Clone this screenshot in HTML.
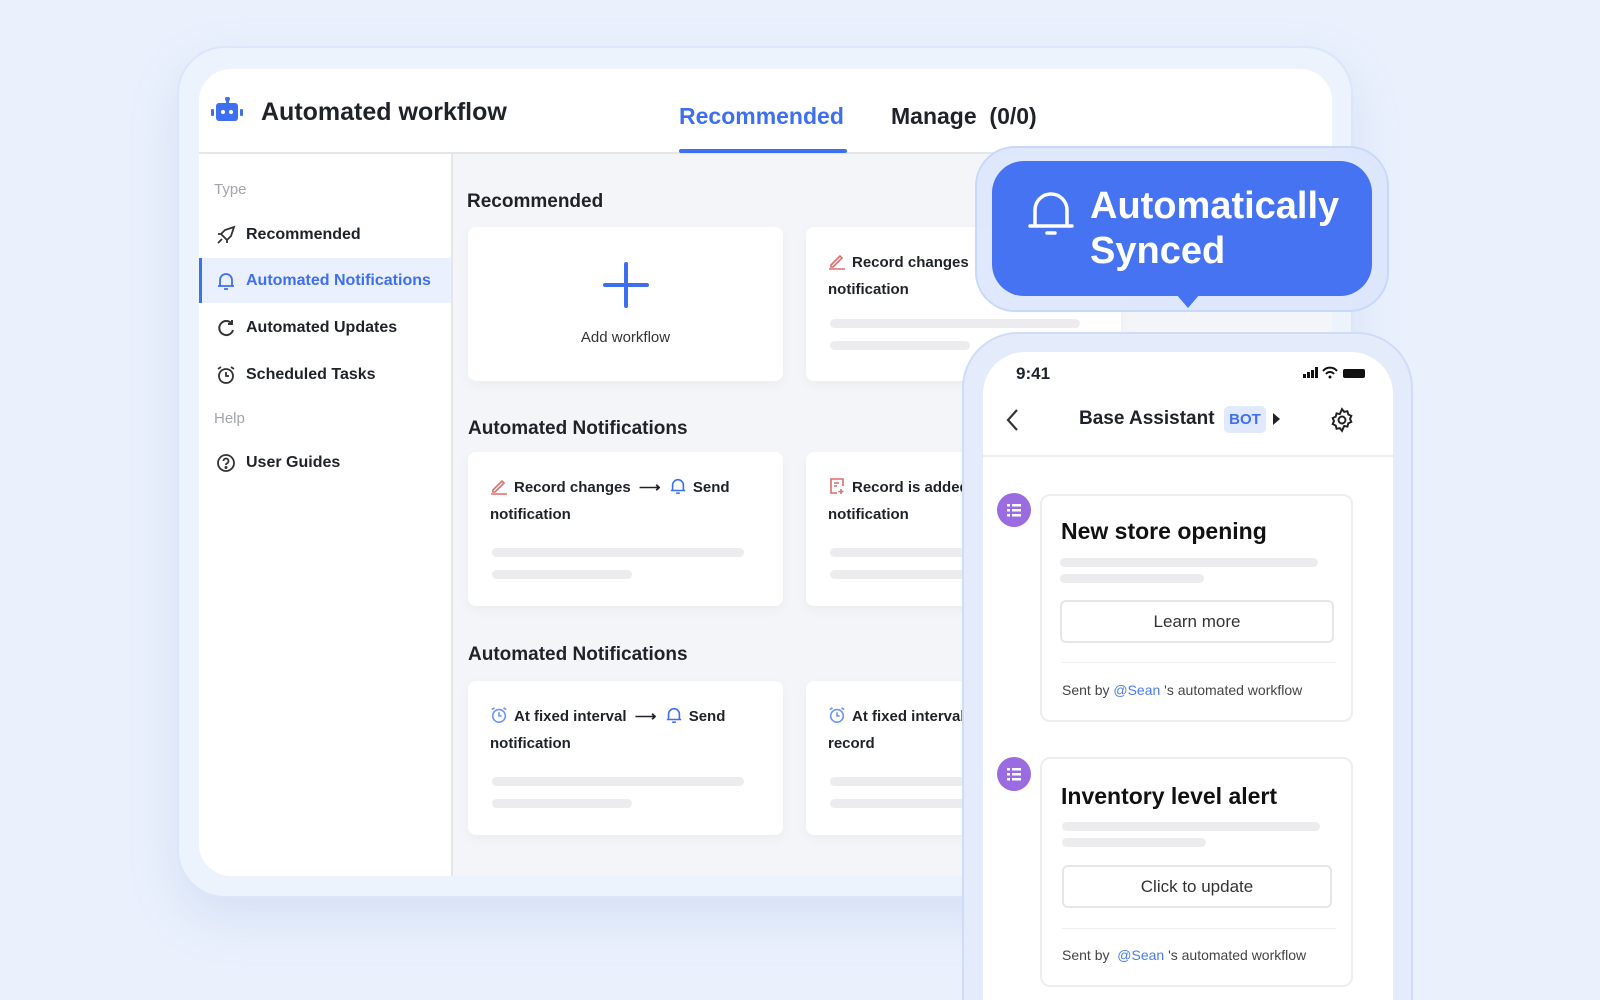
<!DOCTYPE html>
<html><head><meta charset="utf-8"><style>
*{box-sizing:border-box;margin:0;padding:0}
html,body{width:1600px;height:1000px;overflow:hidden}
body{background:#eaf1fd;font-family:"Liberation Sans",sans-serif;color:#1f2329;position:relative}
.a{position:absolute}
.frame{left:177px;top:46px;width:1176px;height:852px;border-radius:48px;background:#edf3fd;border:2px solid #dbe6fb;box-shadow:0 20px 50px rgba(120,150,210,.18)}
.panel{left:199px;top:69px;width:1133px;height:807px;border-radius:32px;background:#f3f5f8;overflow:hidden}
.hdr{left:0;top:0;width:1133px;height:85px;background:#fff;border-bottom:2px solid #e4e6ea}
.side{left:0;top:85px;width:254px;height:722px;background:#fff;border-right:2px solid #e4e6ea}
.si{position:absolute;left:0;width:252px;height:45px;display:flex;align-items:center;padding-left:17px;font-size:16px;font-weight:bold;color:#1f2329}
.si svg{margin-right:10px}
.lab{position:absolute;left:15px;font-size:15px;color:#a0a4ab}
.card{position:absolute;width:315px;height:154px;background:#fff;border-radius:8px;box-shadow:0 4px 12px rgba(0,0,0,.04)}
.h2{position:absolute;font-size:19px;font-weight:bold;color:#1f2329}
.ct{position:absolute;left:22px;top:22px;font-size:15px;font-weight:bold;line-height:27px;color:#1f2329;white-space:nowrap}
.ct svg{vertical-align:-3px;margin-right:6px}
.bar{position:absolute;height:9px;border-radius:5px;background:#ececef}
.phone{left:962px;top:332px;width:451px;height:668px;border-radius:56px 56px 0 0;background:#e4ecfb;border:2px solid #cfdcf8;border-bottom:none}
.pin{left:983px;top:352px;width:410px;height:648px;border-radius:42px 42px 0 0;background:#fff;overflow:hidden}
.mc{position:absolute;left:57px;width:313px;background:#fff;border:2px solid #eceef1;border-radius:10px}
.av{position:absolute;left:14px;width:34px;height:34px;border-radius:50%;background:#9b6ce0}
.btn{position:absolute;left:18px;width:274px;height:43px;border:2px solid #e4e6ea;border-radius:6px;text-align:center;line-height:39px;font-size:17px;color:#333}
.sent{position:absolute;left:20px;font-size:14px;color:#444;white-space:nowrap}
.sent b{color:#4a7cf0;font-weight:normal}
</style></head><body>
<div class="a frame"></div>
<div class="a panel">
 <div class="a hdr">
  <svg class="a" style="left:12px;top:28px" width="32" height="28" viewBox="0 0 32 28"><rect x="15" y="0" width="3" height="6" fill="#3e6ff0"/><circle cx="16.5" cy="2" r="2.5" fill="#3e6ff0"/><rect x="5" y="6" width="22" height="18" rx="3" fill="#3e6ff0"/><rect x="0" y="12" width="3" height="7" rx="1" fill="#3e6ff0"/><rect x="29" y="12" width="3" height="7" rx="1" fill="#3e6ff0"/><circle cx="12" cy="15" r="2" fill="#fff"/><circle cx="20" cy="15" r="2" fill="#fff"/></svg>
  <div class="a" style="left:62px;top:29px;font-size:25px;font-weight:bold">Automated workflow</div>
  <div class="a" style="left:480px;top:34px;font-size:23px;font-weight:bold;color:#3e6ff0">Recommended</div>
  <div class="a" style="left:480px;top:80px;width:168px;height:4px;background:#3e6ff0;border-radius:2px"></div>
  <div class="a" style="left:692px;top:34px;font-size:23px;font-weight:bold">Manage&nbsp; (0/0)</div>
 </div>
 <div class="a side">
  <div class="lab" style="top:27px">Type</div>
  <div class="si" style="top:58px"><svg width="20" height="20" viewBox="0 0 20 20" fill="none" stroke="#333" stroke-width="1.8"><path d="M18 2 L9 5 L5 9 L11 15 L15 11 Z M5 9 L2 9 M11 15 L11 18 M6 14 L2 18"/></svg>Recommended</div>
  <div class="si" style="top:104px;background:#eaf0fd;color:#3e6ff0;border-left:3px solid #3e6ff0;padding-left:14px"><svg width="20" height="20" viewBox="0 0 20 20" fill="none" stroke="#3e6ff0" stroke-width="1.8"><path d="M4 15 V9 a6 6 0 0 1 12 0 V15 Z M2 15 H18 M8 18 H12"/></svg>Automated Notifications</div>
  <div class="si" style="top:151px"><svg width="20" height="20" viewBox="0 0 20 20" fill="none" stroke="#333" stroke-width="2"><path d="M16 6 A7 7 0 1 0 17 12 M16 2 V6 H12"/></svg>Automated Updates</div>
  <div class="si" style="top:198px"><svg width="20" height="20" viewBox="0 0 20 20" fill="none" stroke="#333" stroke-width="1.8"><circle cx="10" cy="11" r="7"/><path d="M10 7 V11 H13 M2 4 L5 2 M18 4 L15 2"/></svg>Scheduled Tasks</div>
  <div class="lab" style="top:256px">Help</div>
  <div class="si" style="top:286px"><svg width="20" height="20" viewBox="0 0 20 20" fill="none" stroke="#333" stroke-width="1.8"><circle cx="10" cy="10" r="8"/><path d="M7.5 8 a2.5 2.5 0 1 1 3.5 2.3 c-.8.4-1 .9-1 1.7"/><circle cx="10" cy="14.5" r=".6" fill="#333"/></svg>User Guides</div>
 </div>
 <div class="h2" style="left:268px;top:122px">Recommended</div>
 <div class="card" style="left:269px;top:158px"><svg class="a" style="left:135px;top:35px" width="46" height="46"><path d="M23 2 V44 M2 23 H44" stroke="#3e6ff0" stroke-width="4" stroke-linecap="round"/></svg><div class="a" style="left:0;width:315px;text-align:center;top:102px;font-size:15px;color:#333">Add workflow</div></div>
 <div class="card" style="left:607px;top:158px"><div class="ct"><svg width="18" height="18" viewBox="0 0 18 18" fill="none" stroke="#e06c6c" stroke-width="1.6"><path d="M3 13 L12 4 L14 6 L5 15 H3 Z M1 17 H17"/></svg>Record changes<br>notification</div><div class="bar" style="left:24px;top:92px;width:250px"></div><div class="bar" style="left:24px;top:114px;width:140px"></div></div>
 <div class="h2" style="left:269px;top:349px">Automated Notifications</div>
 <div class="card" style="left:269px;top:383px"><div class="ct"><svg width="18" height="18" viewBox="0 0 18 18" fill="none" stroke="#e06c6c" stroke-width="1.6"><path d="M3 13 L12 4 L14 6 L5 15 H3 Z M1 17 H17"/></svg>Record changes &nbsp;⟶&nbsp; <svg width="18" height="18" viewBox="0 0 20 20" fill="none" stroke="#3e6ff0" stroke-width="1.8"><path d="M4 15 V9 a6 6 0 0 1 12 0 V15 Z M2 15 H18 M8 18 H12"/></svg>Send<br>notification</div><div class="bar" style="left:24px;top:96px;width:252px"></div><div class="bar" style="left:24px;top:118px;width:140px"></div></div>
 <div class="card" style="left:607px;top:383px"><div class="ct"><svg width="18" height="18" viewBox="0 0 18 18" fill="none" stroke="#e06c6c" stroke-width="1.6"><path d="M15 9 V2 H3 V16 H9 M6 6 H11 M6 9 H9 M13 12 V17 M10.5 14.5 H15.5"/></svg>Record is added<br>notification</div><div class="bar" style="left:24px;top:96px;width:252px"></div><div class="bar" style="left:24px;top:118px;width:140px"></div></div>
 <div class="h2" style="left:269px;top:575px">Automated Notifications</div>
 <div class="card" style="left:269px;top:612px"><div class="ct"><svg width="18" height="18" viewBox="0 0 20 20" fill="none" stroke="#6d95f5" stroke-width="1.8"><circle cx="10" cy="11" r="7"/><path d="M10 7 V11 H13 M2 4 L5 2 M18 4 L15 2"/></svg>At fixed interval &nbsp;⟶&nbsp; <svg width="18" height="18" viewBox="0 0 20 20" fill="none" stroke="#3e6ff0" stroke-width="1.8"><path d="M4 15 V9 a6 6 0 0 1 12 0 V15 Z M2 15 H18 M8 18 H12"/></svg>Send<br>notification</div><div class="bar" style="left:24px;top:96px;width:252px"></div><div class="bar" style="left:24px;top:118px;width:140px"></div></div>
 <div class="card" style="left:607px;top:612px"><div class="ct"><svg width="18" height="18" viewBox="0 0 20 20" fill="none" stroke="#6d95f5" stroke-width="1.8"><circle cx="10" cy="11" r="7"/><path d="M10 7 V11 H13 M2 4 L5 2 M18 4 L15 2"/></svg>At fixed interval<br>record</div><div class="bar" style="left:24px;top:96px;width:252px"></div><div class="bar" style="left:24px;top:118px;width:140px"></div></div>
</div>

<div class="a" style="left:975px;top:146px;width:414px;height:166px;border-radius:40px;background:rgba(220,230,252,.9);border:2px solid #c8d8f8"></div>
<div class="a" style="left:992px;top:161px;width:380px;height:135px;border-radius:32px;background:#4673f1"></div>
<div class="a" style="left:1176px;top:294px;width:0;height:0;border-left:12px solid transparent;border-right:12px solid transparent;border-top:14px solid #4673f1"></div>
<svg class="a" style="left:1028px;top:188px" width="46" height="50" viewBox="0 0 46 50" fill="none" stroke="#fff" stroke-width="3.5" stroke-linecap="round"><path d="M7 38 V22 a16 16 0 0 1 32 0 V38 M2 38 H44 M19 45 H27"/></svg>
<div class="a" style="left:1090px;top:184px;font-size:38px;font-weight:bold;color:#fff;line-height:45px">Automatically<br>Synced</div>

<div class="a phone"></div>
<div class="a pin">
 <div class="a" style="left:33px;top:12px;font-size:17px;font-weight:bold">9:41</div>
 <svg class="a" style="left:320px;top:14px" width="70" height="14"><rect x="0" y="8" width="3" height="4" fill="#111"/><rect x="4" y="6" width="3" height="6" fill="#111"/><rect x="8" y="4" width="3" height="8" fill="#111"/><rect x="12" y="1" width="3" height="11" fill="#111"/><path d="M20 5 a9 9 0 0 1 14 0 M23 8 a5 5 0 0 1 8 0" stroke="#111" stroke-width="2" fill="none"/><circle cx="27" cy="11" r="1.5" fill="#111"/><rect x="40" y="3" width="22" height="9" rx="2" fill="#111"/></svg>
 <svg class="a" style="left:22px;top:56px" width="16" height="24"><path d="M12 2 L3 12 L12 22" stroke="#333" stroke-width="2.2" fill="none"/></svg>
 <div class="a" style="left:96px;top:56px;font-size:19px;font-weight:bold">Base Assistant</div>
 <div class="a" style="left:241px;top:54px;width:42px;height:27px;border-radius:5px;background:#e0e9fd;color:#3e6ff0;font-size:15px;font-weight:bold;text-align:center;line-height:27px">BOT</div>
 <div class="a" style="left:290px;top:61px;width:0;height:0;border-top:6px solid transparent;border-bottom:6px solid transparent;border-left:7px solid #222"></div>
 <svg class="a" style="left:346px;top:55px" width="26" height="26" viewBox="0 0 24 24" fill="none" stroke="#222" stroke-width="1.8"><circle cx="12" cy="12" r="3.2"/><path d="M12 2 l2 2.5 3-.6.8 3 2.8 1.3-1.2 2.8 1.2 2.8-2.8 1.3-.8 3-3-.6L12 22l-2-2.5-3 .6-.8-3L3.4 15.8 4.6 13 3.4 10.2l2.8-1.3.8-3 3 .6Z"/></svg>
 <div class="a" style="left:0;top:103px;width:410px;height:2px;background:#eceef1"></div>
 <div class="av" style="top:141px"></div>
 <svg class="a" style="left:22px;top:150px" width="18" height="16"><g fill="#fff"><rect x="2" y="2" width="3" height="2.5"/><rect x="7" y="2" width="9" height="2.5"/><rect x="2" y="7" width="3" height="2.5"/><rect x="7" y="7" width="9" height="2.5"/><rect x="2" y="12" width="3" height="2.5"/><rect x="7" y="12" width="9" height="2.5"/></g></svg>
 <div class="mc" style="top:142px;height:228px">
  <div class="a" style="left:19px;top:22px;font-size:23px;font-weight:bold;color:#111">New store opening</div>
  <div class="bar" style="left:18px;top:62px;width:258px"></div>
  <div class="bar" style="left:18px;top:78px;width:144px"></div>
  <div class="btn" style="top:104px">Learn more</div>
  <div class="a" style="left:20px;top:166px;width:274px;height:1px;background:#eceef1"></div>
  <div class="sent" style="top:186px">Sent by <b>@Sean</b> 's automated workflow</div>
 </div>
 <div class="av" style="top:405px"></div>
 <svg class="a" style="left:22px;top:414px" width="18" height="16"><g fill="#fff"><rect x="2" y="2" width="3" height="2.5"/><rect x="7" y="2" width="9" height="2.5"/><rect x="2" y="7" width="3" height="2.5"/><rect x="7" y="7" width="9" height="2.5"/><rect x="2" y="12" width="3" height="2.5"/><rect x="7" y="12" width="9" height="2.5"/></g></svg>
 <div class="mc" style="top:405px;height:230px">
  <div class="a" style="left:19px;top:24px;font-size:23px;font-weight:bold;color:#111">Inventory level alert</div>
  <div class="bar" style="left:20px;top:63px;width:258px"></div>
  <div class="bar" style="left:20px;top:79px;width:144px"></div>
  <div class="btn" style="left:20px;top:106px;width:270px">Click to update</div>
  <div class="a" style="left:20px;top:169px;width:274px;height:1px;background:#eceef1"></div>
  <div class="sent" style="top:188px">Sent by &nbsp;<b>@Sean</b> 's automated workflow</div>
 </div>
</div>
</body></html>
